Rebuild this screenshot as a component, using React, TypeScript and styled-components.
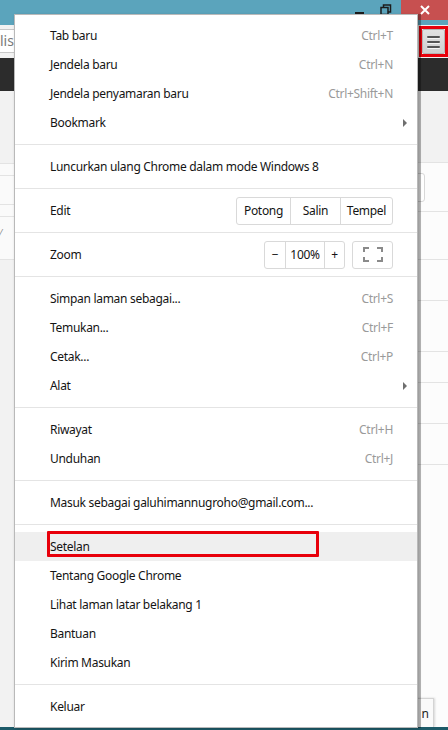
import React from 'react';
import styled, {createGlobalStyle} from 'styled-components';

const colors = {
  titleBar: '#5ba4bc',
  close: '#c75050',
  toolbar: '#f2f2f2',
  strip: '#2c2c2c',
  page: '#f2f2f2',
  pageLine: '#e3e3e3',
  menuBorder: '#b9b9b9',
  divider: '#e4e4e4',
  text: '#141414',
  shortcut: '#9a9a9a',
  hover: '#efefef',
  control: '#d9d9d9',
  mark: '#e8000b',
};

const font = `"Noto Sans", "Open Sans", "DejaVu Sans", sans-serif`;

const GlobalStyle = createGlobalStyle`
  html, body {
    margin: 0;
    padding: 0;
    background: ${colors.page};
  }
  body {
    font-family: ${font};
    -webkit-font-smoothing: antialiased;
  }
`;

type Entry =
  | {kind: 'item'; label: string; shortcut?: string; submenu?: boolean; active?: boolean}
  | {kind: 'sep'}
  | {kind: 'edit'}
  | {kind: 'zoom'};

const entries: Entry[] = [
  {kind: 'item', label: 'Tab baru', shortcut: 'Ctrl+T'},
  {kind: 'item', label: 'Jendela baru', shortcut: 'Ctrl+N'},
  {kind: 'item', label: 'Jendela penyamaran baru', shortcut: 'Ctrl+Shift+N'},
  {kind: 'item', label: 'Bookmark', submenu: true},
  {kind: 'sep'},
  {kind: 'item', label: 'Luncurkan ulang Chrome dalam mode Windows 8'},
  {kind: 'sep'},
  {kind: 'edit'},
  {kind: 'sep'},
  {kind: 'zoom'},
  {kind: 'sep'},
  {kind: 'item', label: 'Simpan laman sebagai...', shortcut: 'Ctrl+S'},
  {kind: 'item', label: 'Temukan...', shortcut: 'Ctrl+F'},
  {kind: 'item', label: 'Cetak...', shortcut: 'Ctrl+P'},
  {kind: 'item', label: 'Alat', submenu: true},
  {kind: 'sep'},
  {kind: 'item', label: 'Riwayat', shortcut: 'Ctrl+H'},
  {kind: 'item', label: 'Unduhan', shortcut: 'Ctrl+J'},
  {kind: 'sep'},
  {kind: 'item', label: 'Masuk sebagai galuhimannugroho@gmail.com...'},
  {kind: 'sep'},
  {kind: 'item', label: 'Setelan', active: true},
  {kind: 'item', label: 'Tentang Google Chrome'},
  {kind: 'item', label: 'Lihat laman latar belakang 1'},
  {kind: 'item', label: 'Bantuan'},
  {kind: 'item', label: 'Kirim Masukan'},
  {kind: 'sep'},
  {kind: 'item', label: 'Keluar'},
];

// rows of the page behind the menu: [height, white background]
const mainRows: [number, boolean][] = [
  [72, false], [49, true], [48, true], [41, true], [51, true], [31, true], [41, true], [41, true],
];

const ChromeMenu = () => (
  <Menu>
    {entries.map((entry, index) => {
      if (entry.kind === 'sep') return <Divider key={index}/>;
      if (entry.kind === 'edit') {
        return (
          <Item key={index}>
            <Label>Edit</Label>
            <Group>
              <GroupButton width={53}>Potong</GroupButton>
              <GroupButton width={50}>Salin</GroupButton>
              <GroupButton width={52}>Tempel</GroupButton>
            </Group>
          </Item>
        );
      }
      if (entry.kind === 'zoom') {
        return (
          <Item key={index}>
            <Label>Zoom</Label>
            <Group>
              <GroupButton width={20}>−</GroupButton>
              <GroupButton width={39}>100%</GroupButton>
              <GroupButton width={20}>+</GroupButton>
            </Group>
            <FullscreenButton>
              <svg width="20" height="15" viewBox="0 0 20 15" fill="none" stroke="#8a8a8a" strokeWidth="2">
                <path d="M1 5V1h5M14 1h5v4M19 10v4h-5M6 14H1v-4"/>
              </svg>
            </FullscreenButton>
          </Item>
        );
      }
      return (
        <Item key={index} active={entry.active}>
          <Label>{entry.label}</Label>
          {entry.shortcut && <Shortcut>{entry.shortcut}</Shortcut>}
          {entry.submenu && <SubmenuArrow/>}
          {entry.active && <Highlight/>}
        </Item>
      );
    })}
  </Menu>
);

const App = () => (
  <Window>
    <GlobalStyle/>
    <TitleBar>
      <Caption>
        <svg width="12" height="12" viewBox="0 0 12 12">
          <rect x="1" y="8" width="9" height="2" fill="#1c1c1c"/>
        </svg>
      </Caption>
      <Caption>
        <svg width="12" height="12" viewBox="0 0 12 12" fill="none" stroke="#1c1c1c" strokeWidth="1.5">
          <rect x="1" y="3.5" width="7" height="7"/>
          <path d="M3.5 3.5V1h7v7H8"/>
        </svg>
      </Caption>
      <CloseButton>
        <svg width="10" height="10" viewBox="0 0 10 10" stroke="#fff" strokeWidth="2">
          <path d="M1 1l8 8M9 1l-8 8"/>
        </svg>
      </CloseButton>
    </TitleBar>
    <Toolbar>
      <Omnibox>lis</Omnibox>
      <MenuButtonMark>
        <MenuButton>
          <Bar/>
          <Bar/>
          <Bar/>
        </MenuButton>
      </MenuButtonMark>
    </Toolbar>
    <Strip/>
    <Page>
      <Sidebar>
        <SideRow height={72}/>
        <SideRow height={11} white/>
        <SideRow height={28} white/>
        <SideRow height={11} white/>
        <SideRow height={42} white>⁄</SideRow>
      </Sidebar>
      <Main>
        {mainRows.map(([height, white], index) => (
          <MainRow key={index} height={height} white={white}>
            {index === 1 && <SearchBox/>}
          </MainRow>
        ))}
        <Footer>
          <FooterButton>n</FooterButton>
        </Footer>
      </Main>
    </Page>
    <Taskbar/>
    <ChromeMenu/>
  </Window>
);

const Window = styled.div`
  position: relative;
  width: 448px;
  height: 730px;
  overflow: hidden;
  display: flex;
  flex-direction: column;
  background: ${colors.page};
`;

const TitleBar = styled.div`
  height: 25px;
  flex-shrink: 0;
  display: flex;
  justify-content: flex-end;
  align-items: flex-start;
  background: ${colors.titleBar};
`;

const Caption = styled.div`
  width: 26px;
  height: 20px;
  display: flex;
  align-items: center;
  justify-content: center;
`;

const CloseButton = styled.div`
  width: 47px;
  height: 20px;
  margin-left: 2px;
  display: flex;
  align-items: center;
  justify-content: center;
  background: ${colors.close};
`;

const Toolbar = styled.div`
  height: 33px;
  flex-shrink: 0;
  display: flex;
  align-items: center;
  justify-content: space-between;
  background: ${colors.toolbar};
`;

const Omnibox = styled.div`
  width: 300px;
  height: 24px;
  margin-top: -1px;
  box-sizing: border-box;
  border: 1px solid #c8c8c8;
  border-left: none;
  background: #fff;
  color: #7a7a7a;
  font-size: 14px;
  line-height: 22px;
`;

const MenuButtonMark = styled.div`
  width: 29px;
  height: 31px;
  box-sizing: border-box;
  border: 3px solid ${colors.mark};
  display: flex;
  align-items: center;
  justify-content: center;
`;

const MenuButton = styled.div`
  width: 23px;
  height: 25px;
  box-sizing: border-box;
  border: 1px solid #b4b4b4;
  border-radius: 2px;
  background: linear-gradient(#e2e2e2, #cfcfcf);
  display: flex;
  flex-direction: column;
  align-items: center;
  justify-content: center;
  gap: 3px;
`;

const Bar = styled.div`
  width: 13px;
  height: 2px;
  border-radius: 1px;
  background: #555;
  box-shadow: 0 1px 0 #f4f4f4;
`;

const Strip = styled.div`
  height: 33px;
  flex-shrink: 0;
  background: ${colors.strip};
`;

const Page = styled.div`
  flex: 1;
  display: grid;
  grid-template-columns: 200px 1fr;
`;

const Sidebar = styled.div`
  display: flex;
  flex-direction: column;
  background: ${colors.page};
`;

const SideRow = styled.div<{height: number; white?: boolean}>`
  height: ${p => p.height}px;
  border-bottom: 1px solid ${colors.pageLine};
  background: ${p => (p.white ? '#fafafa' : colors.page)};
  color: #888;
  font-size: 10px;
  line-height: 32px;
`;

const Main = styled.div`
  display: flex;
  flex-direction: column;
  border-left: 1px solid ${colors.pageLine};
  background: #fcfcfc;
`;

const MainRow = styled.div<{height: number; white: boolean}>`
  height: ${p => p.height}px;
  flex-shrink: 0;
  box-sizing: border-box;
  border-bottom: 1px solid ${colors.pageLine};
  background: ${p => (p.white ? '#fcfcfc' : colors.page)};
  display: flex;
  justify-content: flex-end;
  align-items: flex-start;
`;

const SearchBox = styled.div`
  width: 120px;
  height: 29px;
  margin: 10px 23px 0 0;
  box-sizing: border-box;
  border: 1px solid #d8d8d8;
  border-radius: 3px;
  background: #fff;
`;

const Footer = styled.div`
  flex: 1;
  display: flex;
  justify-content: flex-end;
  align-items: flex-end;
  padding-right: 14px;
`;

const FooterButton = styled.div`
  width: 40px;
  height: 29px;
  box-sizing: border-box;
  border: 1px solid #d4d4d4;
  border-bottom: none;
  background: #fafafa;
  box-shadow: 1px 0 2px rgba(0, 0, 0, 0.15);
  font-size: 12px;
  color: #222;
  line-height: 30px;
  text-align: right;
  padding-right: 4px;
`;

const Taskbar = styled.div`
  height: 3px;
  flex-shrink: 0;
  background: #1d5a68;
`;

const Menu = styled.div`
  position: absolute;
  top: 14px;
  left: 14px;
  width: 404px;
  box-sizing: border-box;
  padding: 6px 0;
  background: #fff;
  border: 1px solid ${colors.menuBorder};
  box-shadow: 3px 0 0 rgba(0, 0, 0, 0.28), 1px 1px 3px rgba(0, 0, 0, 0.2);
  font-family: ${font};
  font-size: 12px;
  letter-spacing: -0.3px;
  color: ${colors.text};
`;

const Item = styled.div<{active?: boolean}>`
  position: relative;
  height: 29px;
  padding: 0 24px 0 35px;
  display: flex;
  align-items: center;
  background: ${p => (p.active ? colors.hover : 'transparent')};
`;

const Label = styled.span`
  flex: 1;
  white-space: nowrap;
`;

const Shortcut = styled.span`
  color: ${colors.shortcut};
`;

const SubmenuArrow = styled.span`
  width: 0;
  height: 0;
  margin-right: -14px;
  border-top: 4px solid transparent;
  border-bottom: 4px solid transparent;
  border-left: 4px solid #6f6f6f;
`;

const Highlight = styled.span`
  position: absolute;
  left: 32px;
  top: -1px;
  width: 272px;
  height: 26px;
  box-sizing: border-box;
  border: 3px solid ${colors.mark};
  border-radius: 1px;
`;

const Divider = styled.div`
  height: 1px;
  margin: 7px 0;
  background: ${colors.divider};
`;

const Group = styled.div`
  display: flex;
  height: 28px;
  box-sizing: border-box;
  border: 1px solid ${colors.control};
  border-radius: 3px;
`;

const GroupButton = styled.div<{width: number}>`
  width: ${p => p.width}px;
  box-sizing: border-box;
  display: flex;
  align-items: center;
  justify-content: center;
  & + & {
    border-left: 1px solid ${colors.control};
  }
`;

const FullscreenButton = styled.div`
  width: 41px;
  height: 28px;
  margin-left: 7px;
  box-sizing: border-box;
  border: 1px solid ${colors.control};
  border-radius: 3px;
  display: flex;
  align-items: center;
  justify-content: center;
`;

export default App;
